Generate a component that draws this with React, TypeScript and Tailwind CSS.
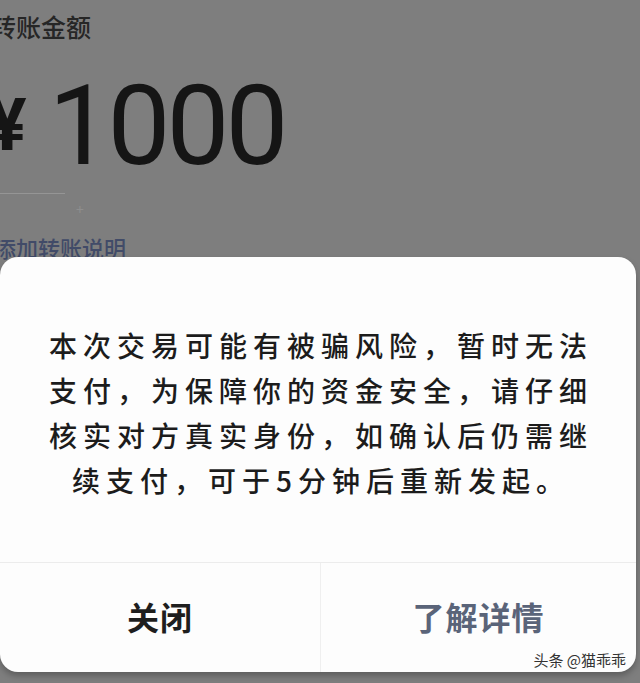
import React from "react"

const cjk = { fontFamily: '"Noto Sans CJK SC", "Noto Sans", sans-serif' }

export default function App() {
  return (
    <div className="relative w-[640px] h-[683px] overflow-hidden bg-[#7e7e7e]" style={cjk}>
      {/* transfer page behind the mask */}
      <div className="pt-[11px]">
        <div className="ml-[-9px] text-[25px] leading-[30px] font-medium text-[#262626]">转账金额</div>
        <div className="mt-[45px] flex items-end h-[96px]">
          <span className="ml-[-12px] text-[72px] leading-none font-bold text-[#151515] pb-[20px]" style={{ fontFamily: "Roboto, sans-serif" }}>¥</span>
          <span className="ml-[22px] text-[112px] leading-none tracking-[-4px] text-[#151515]" style={{ fontFamily: "Roboto, sans-serif" }}>1000</span>
        </div>
        <div className="mt-[11px] flex items-center">
          <div className="w-[65px] h-px bg-[#959595]"></div>
        </div>
        <div className="ml-[76px] mt-[8px] text-[14px] leading-none text-[#8e8e8e]">+</div>
        <div className="ml-[-6px] mt-[17px] text-[22px] leading-[28px] font-medium text-[#414b68]">添加转账说明</div>
      </div>

      {/* risk dialog */}
      <div className="absolute left-0 top-[257px] w-[636px] h-[415px] rounded-[18px] bg-[#fdfdfd] shadow-[0_4px_6px_rgba(0,0,0,0.25)] flex flex-col">
        <div className="pt-[66px] h-[305px] flex justify-center">
          <p className="w-[560px] text-center text-[28px] leading-[45px] tracking-[6px] font-medium text-[#1c1c1c] pl-[6px]">
            本次交易可能有被骗风险，暂时无法支付，为保障你的资金安全，请仔细核实对方真实身份，如确认后仍需继续支付，可于5分钟后重新发起。
          </p>
        </div>
        <div className="flex flex-1 border-t border-[#ececec]">
          <div className="w-[320px] flex items-center justify-center text-[32px] font-bold tracking-[1px] text-[#1e1e1e] pb-[4px]">关闭</div>
          <div className="flex-1 flex items-center justify-center border-l border-[#efefef] text-[32px] font-bold tracking-[1px] text-[#5a6479] pb-[4px]">了解详情</div>
        </div>
      </div>

      {/* watermark */}
      <div className="absolute right-[14px] top-[650px] text-[15px] leading-[20px] text-[#333] [text-shadow:0_0_2px_#fff]">头条 @猫乖乖</div>
    </div>
  )
}
